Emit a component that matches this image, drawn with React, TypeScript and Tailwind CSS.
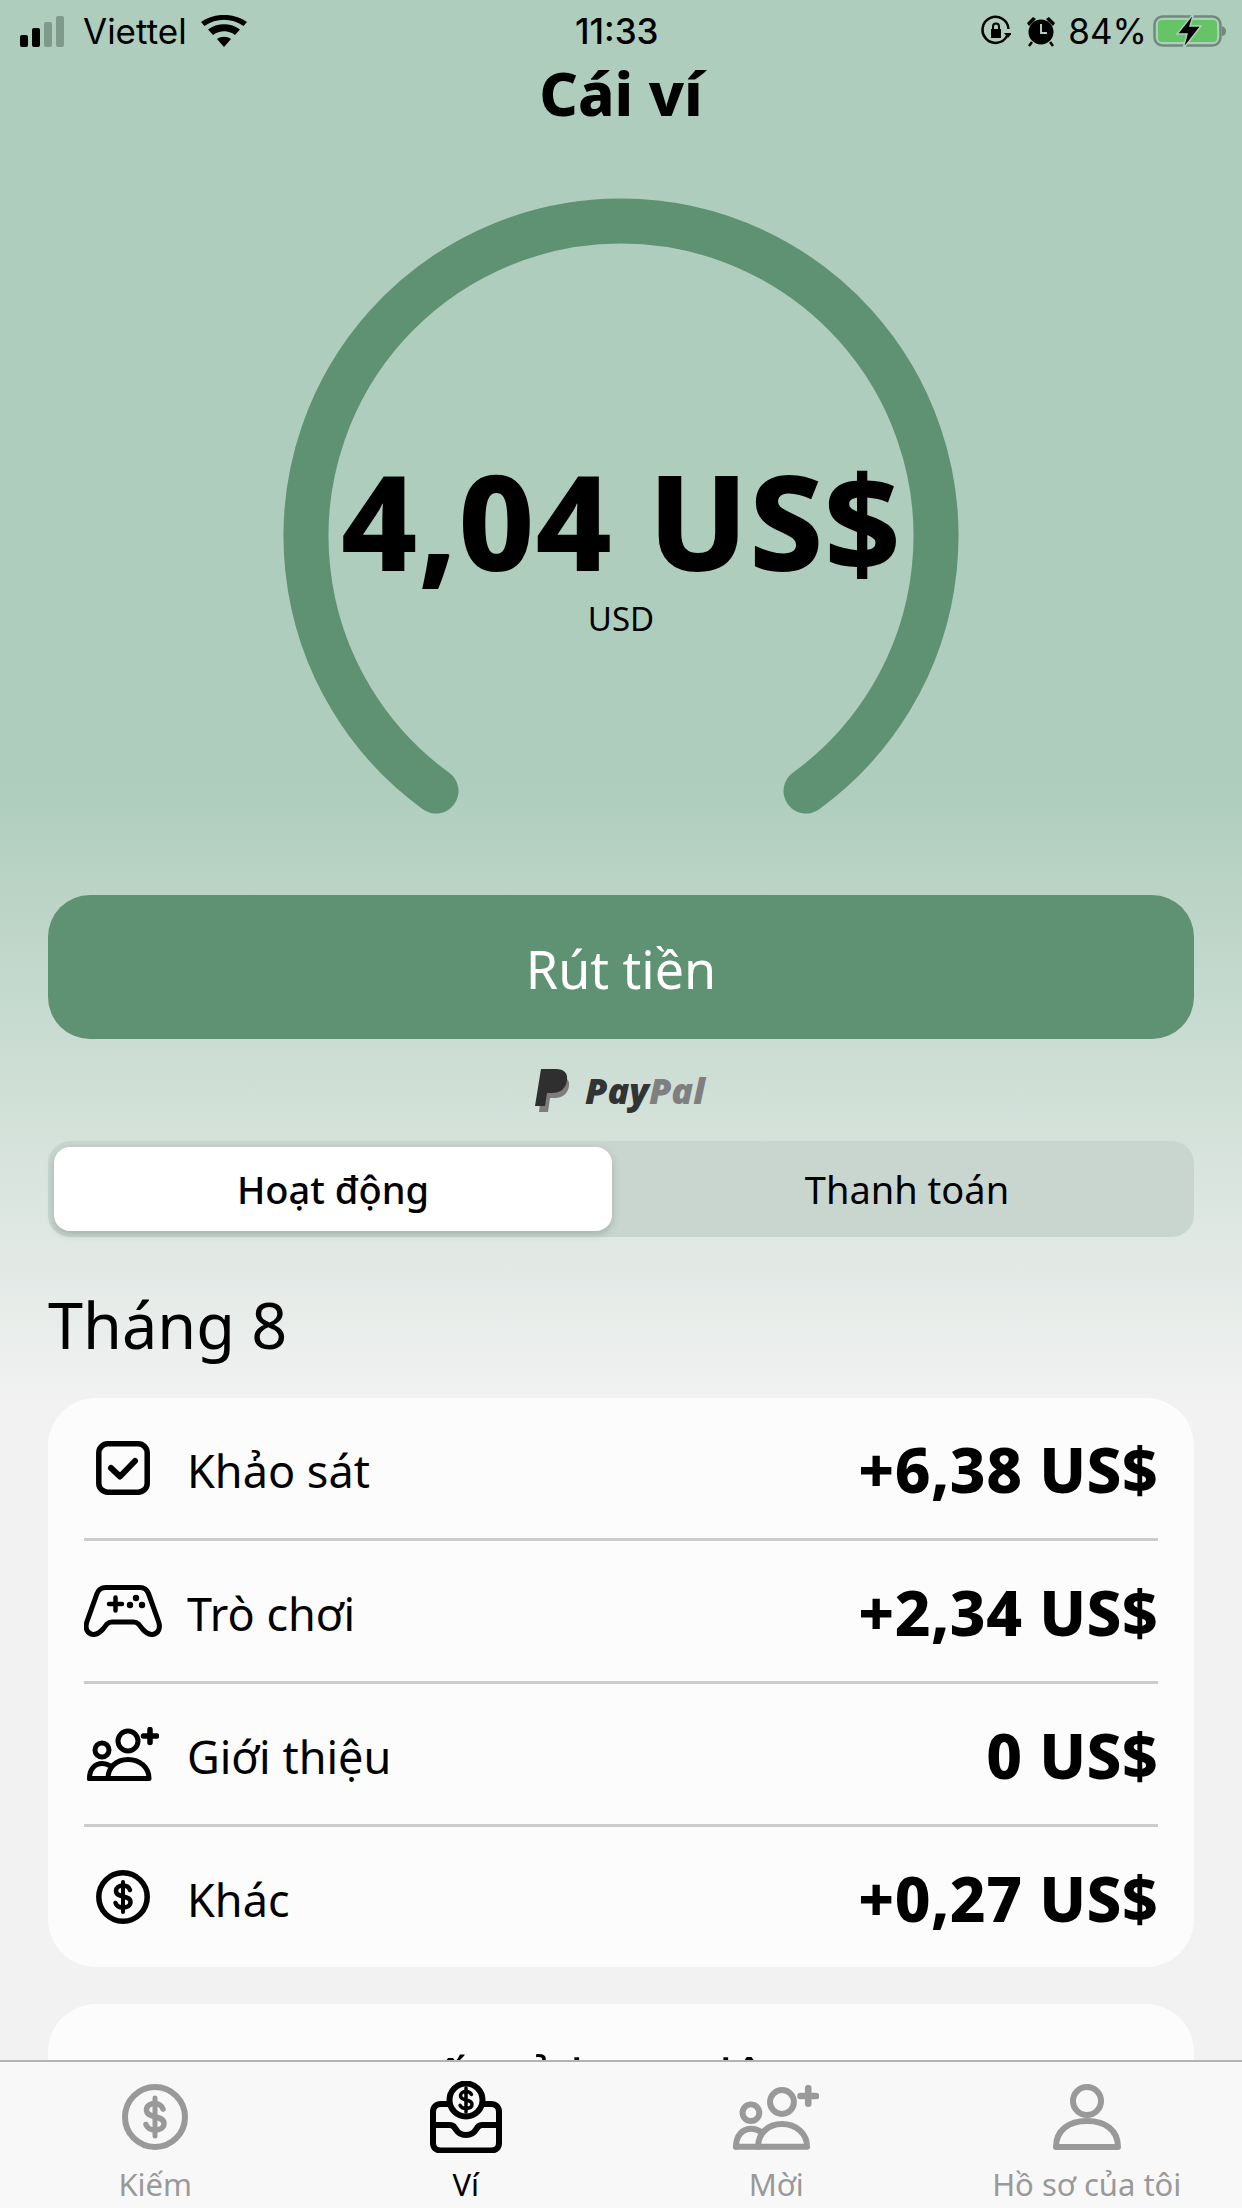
import type { ReactNode } from "react";

const rows = [
  { label: "Khảo sát", amount: "+6,38 US$", icon: <CheckIcon /> },
  { label: "Trò chơi", amount: "+2,34 US$", icon: <GamepadIcon /> },
  { label: "Giới thiệu", amount: "0 US$", icon: <FriendsIcon /> },
  { label: "Khác", amount: "+0,27 US$", icon: <CoinIcon /> },
];

function CheckIcon() {
  return (
    <svg width="54" height="54" viewBox="0 0 54 54" fill="none" stroke="#000" strokeWidth="5.500" strokeLinecap="round" strokeLinejoin="round">
      <rect x="2.800" y="2.800" width="48.400" height="48.400" rx="9" />
      <path d="M15 27l9 8.500 15-15.500" strokeWidth="6" />
    </svg>
  );
}

function GamepadIcon() {
  return (
    <svg width="78" height="52" viewBox="0 0 78 52" fill="none" stroke="#000" strokeWidth="5" strokeLinecap="round" strokeLinejoin="round">
      <path d="M22 2.500h34c4 0 7 2 8.500 6l10 28c2.500 7-.5 12.500-6 13-4 .3-7-2-10-5.500l-4-5c-1.500-1.500-3-2-5-2H28c-2 0-3.500.5-5 2l-4 5c-3 3.500-6 5.800-10 5.500-5.500-.5-8.500-6-6-13l10-28c1.500-4 4.500-6 9-6z" />
      <path d="M25 19h13M31.500 12.500v13" strokeWidth="4.500" />
      <circle cx="46" cy="20" r="3.200" fill="#000" stroke="none" />
      <circle cx="52" cy="13" r="3.200" fill="#000" stroke="none" />
      <circle cx="58" cy="20" r="3.200" fill="#000" stroke="none" />
    </svg>
  );
}

function FriendsIcon({ color = "#000", width = 72, height = 54 }: { color?: string; width?: number; height?: number }) {
  return (
    <svg width={width} height={height} viewBox="0 0 72 54" fill="none" stroke={color} strokeWidth="5" strokeLinecap="round" strokeLinejoin="round">
      <circle cx="15" cy="23" r="7" />
      <circle cx="41" cy="14" r="10" />
      <path d="M2.500 51.500c0-9 5-15 13-15 3 0 5.500 1 8 2.500" />
      <path d="M21 51.500c0-11 8-19 20-19s21 8 21 19z" />
      <path d="M2.500 51.500H21" />
      <path d="M63 2.500v13M56.500 9h13" strokeWidth="5.500" />
    </svg>
  );
}

function CoinIcon() {
  return (
    <svg width="54" height="54" viewBox="0 0 54 54" fill="none" stroke="#000" strokeWidth="5.500" strokeLinecap="round">
      <circle cx="27" cy="27" r="24.200" />
      <path d="M34 20c-1-3-4-4.500-7-4.500-4 0-7 2-7 5.500 0 7.500 14.500 3.500 14.500 11 0 3.500-3.500 5.500-7.500 5.500-3.500 0-6.500-1.500-7.500-4.500" strokeWidth="4.500" />
      <path d="M27 12v30" strokeWidth="4" />
    </svg>
  );
}

function TabCoin() {
  return (
    <svg width="66" height="66" viewBox="0 0 66 66" fill="none" stroke="#999" strokeWidth="6" strokeLinecap="round">
      <circle cx="33" cy="33" r="30" />
      <path d="M41 25c-1-3.500-4.500-5.500-8-5.500-5 0-8.500 2.500-8.500 6.500 0 9 17.500 4.500 17.500 13.500 0 4-4 6.500-9 6.500-4 0-8-2-9-5.500" strokeWidth="5.500" />
      <path d="M33 14v38" strokeWidth="5" />
    </svg>
  );
}

function TabWallet() {
  return (
    <svg width="72" height="72" viewBox="0 0 72 72" fill="none" stroke="#000" strokeWidth="6" strokeLinecap="round" strokeLinejoin="round">
      <path d="M19 23H11c-5 0-8 3-8 8v31c0 5 3 7.500 8 7.500h50c5 0 8-2.500 8-7.500V31c0-5-3-8-8-8h-8" />
      <path d="M3 44h17c3 0 4 1.500 6 4.500 2 3.500 5 5.500 10 5.500s8-2 10-5.500c2-3 3-4.500 6-4.500h17" />
      <circle cx="36" cy="19" r="16.500" fill="#f8f8f8" />
      <path d="M41.500 13.500c-1-2-3-3-5.500-3-3 0-5.500 1.500-5.500 4.200 0 5.800 11.500 2.800 11.500 8.600 0 2.700-2.500 4.200-6 4.200-2.500 0-5-1-6-3.200M36 7v24" strokeWidth="3.500" />
    </svg>
  );
}

function TabProfile() {
  return (
    <svg width="68" height="66" viewBox="0 0 68 66" fill="none" stroke="#999" strokeWidth="6" strokeLinecap="round" strokeLinejoin="round">
      <circle cx="34" cy="17" r="14" />
      <path d="M3 63c0-17 13-26 31-26s31 9 31 26z" />
    </svg>
  );
}

function PayPalMark() {
  return (
    <svg width="36" height="43" viewBox="0 0 36 43">
      <path d="M8 7h15c7 0 12 3 11 10-1 8-7 12-14 12h-5l-2 14H4z" fill="#7d7d7d" />
      <path d="M6 0h15c8 0 12 4 11 11-1 9-7 13-15 13h-5l-2 13H0z" fill="#2f2f2f" />
    </svg>
  );
}

function TabItem({ icon, label, active }: { icon: ReactNode; label: string; active?: boolean }) {
  return (
    <div className="flex flex-col items-center">
      <div className="flex h-[94px] items-center justify-center">{icon}</div>
      <span className={`text-[31px] leading-[40px] ${active ? "text-black" : "text-[#999999]"}`}>{label}</span>
    </div>
  );
}

export default function App() {
  return (
    <div className="relative h-[2208px] w-[1242px] overflow-hidden bg-[linear-gradient(180deg,#aecdbc_780px,#f2f2f2_1410px)] font-['Noto_Sans',sans-serif] text-black">
      {/* status bar */}
      <div className="flex h-[62px] items-center justify-between pl-[20px] pr-[15px] font-['Inter',sans-serif] text-[35px] leading-none">
        <div className="flex items-center">
          <div className="flex items-end gap-[4px]">
            <span className="h-[12px] w-[8px] rounded-[2px] bg-black" />
            <span className="h-[19px] w-[8px] rounded-[2px] bg-black" />
            <span className="h-[25px] w-[8px] rounded-[2px] bg-[#7f9a8c]" />
            <span className="h-[31px] w-[8px] rounded-[2px] bg-[#7f9a8c]" />
          </div>
          <span className="ml-[19px]">Viettel</span>
          <svg className="ml-[14px]" width="46" height="32" viewBox="0 0 46 32">
            <path d="M23 32l-7-8c4-3 10-3 14 0z" />
            <path d="M12 20l-5-5.500c9-7 23-7 32 0L34 20c-6.500-5-15-5-22 0z" />
            <path d="M3.500 11L0 7C13-2.500 33-2.500 46 7l-3.500 4C30.500 2.500 15.500 2.500 3.500 11z" />
          </svg>
        </div>
        <span className="absolute left-[575px] font-medium">11:33</span>
        <div className="flex items-center">
          <svg width="30" height="32" viewBox="0 0 30 32" fill="none" stroke="#000" strokeWidth="2.500">
            <path d="M26 21A13 13 0 1 1 27.500 14" />
            <path d="M23 18h8l-4 5z" fill="#000" stroke="none" />
            <rect x="10" y="14" width="10" height="9" fill="#000" stroke="none" />
            <path d="M12 14v-2.500a3 3 0 0 1 6 0V14" strokeWidth="2" />
          </svg>
          <svg className="ml-[15px]" width="30" height="32" viewBox="0 0 30 32">
            <circle cx="15" cy="17" r="12.500" />
            <path d="M1 8l6-6 3 2-7 7zM29 8l-6-6-3 2 7 7z" />
            <path d="M15 9v9h6" stroke="#aecdbc" strokeWidth="2" fill="none" />
            <path d="M6 27l-3 4M24 27l3 4" stroke="#000" strokeWidth="2.500" />
          </svg>
          <span className="ml-[12px]">84%</span>
          <svg className="ml-[6px]" width="74" height="36" viewBox="0 0 74 36">
            <rect x="1.500" y="3.500" width="66" height="29" rx="8" fill="none" stroke="#6f8a7b" strokeWidth="2.500" />
            <rect x="5" y="7" width="59" height="22" rx="4" fill="#65c466" />
            <path d="M69 13c3 1 4 3 4 5s-1 5-4 5z" fill="#6f8a7b" />
            <path d="M41 0L24 21h10l-4 15 18-23H37z" stroke="#aecdbc" strokeWidth="1.500" />
          </svg>
        </div>
      </div>

      <h1 className="-mt-[3px] h-[68px] text-center text-[60px] font-extrabold leading-[68px]">Cái ví</h1>

      {/* balance gauge */}
      <div className="relative mx-auto mt-[64px] h-[640px] w-[720px]">
        <svg width="720" height="640" viewBox="0 0 720 640" fill="none">
          <path d="M175 600A315 315 0 1 1 545 600" stroke="#5f9272" strokeWidth="45" strokeLinecap="round" />
        </svg>
        <div className="absolute inset-x-0 top-[259px] flex flex-col items-center">
          <span className="whitespace-nowrap text-[132px] font-extrabold leading-[140px] tracking-[1px]">4,04 US$</span>
          <span className="mt-[9px] text-[33px] leading-[40px]">USD</span>
        </div>
      </div>

      <div className="px-12">
        <button type="button" className="mt-[64px] flex h-[144px] w-full items-center justify-center rounded-[42px] bg-[#5f9272] pt-[4px] text-[52px] text-white">
          Rút tiền
        </button>

        <div className="mt-[30px] flex h-[43px] items-center justify-center gap-[14px] pr-[2px]">
          <PayPalMark />
          <span className="font-['Open_Sans',sans-serif] text-[36px] font-extrabold italic leading-none text-[#333333]">
            Pay<span className="text-[#7f7f7f]">Pal</span>
          </span>
        </div>

        <div className="mt-[29px] grid h-[96px] grid-cols-[558px_1fr] rounded-[22px] bg-[#c9d6cf] p-[6px] text-[38px]">
          <div className="flex items-center justify-center rounded-[16px] bg-white font-medium shadow-[0_3px_8px_rgba(0,0,0,0.18)]">Hoạt động</div>
          <div className="flex items-center justify-center pl-[14px]">Thanh toán</div>
        </div>

        <h2 className="mt-[50px] h-[91px] text-[63px] leading-[76px]">Tháng 8</h2>

        <div className="mt-[20px] rounded-[48px] bg-[#fcfcfc] px-9">
          {rows.map((row, i) => (
            <div key={row.label} className={`flex items-center ${i < 3 ? "h-[143px] border-b-[3px] border-[#cccccc]" : "h-[140px]"}`}>
              <div className="flex w-[78px] justify-center">{row.icon}</div>
              <span className="ml-[25px] pt-[5px] text-[45px]">{row.label}</span>
              <span className="ml-auto pt-[3px] text-[62px] font-extrabold tracking-[0.500px]">{row.amount}</span>
            </div>
          ))}
        </div>

        <div className="mt-[37px] h-[300px] rounded-[48px] bg-[#fcfcfc] pt-[44px] text-center text-[54px] leading-[60px]">
          Tất cả hoạt động
        </div>
      </div>

      {/* tab bar */}
      <div className="absolute inset-x-0 bottom-0 grid h-[148px] grid-cols-4 border-t-2 border-[#b3b3b3] bg-[#f8f8f8] pt-[8px]">
        <TabItem icon={<TabCoin />} label="Kiếm" />
        <TabItem icon={<TabWallet />} label="Ví" active />
        <TabItem icon={<FriendsIcon color="#999" width={86} height={65} />} label="Mời" />
        <TabItem icon={<TabProfile />} label="Hồ sơ của tôi" />
      </div>
    </div>
  );
}
